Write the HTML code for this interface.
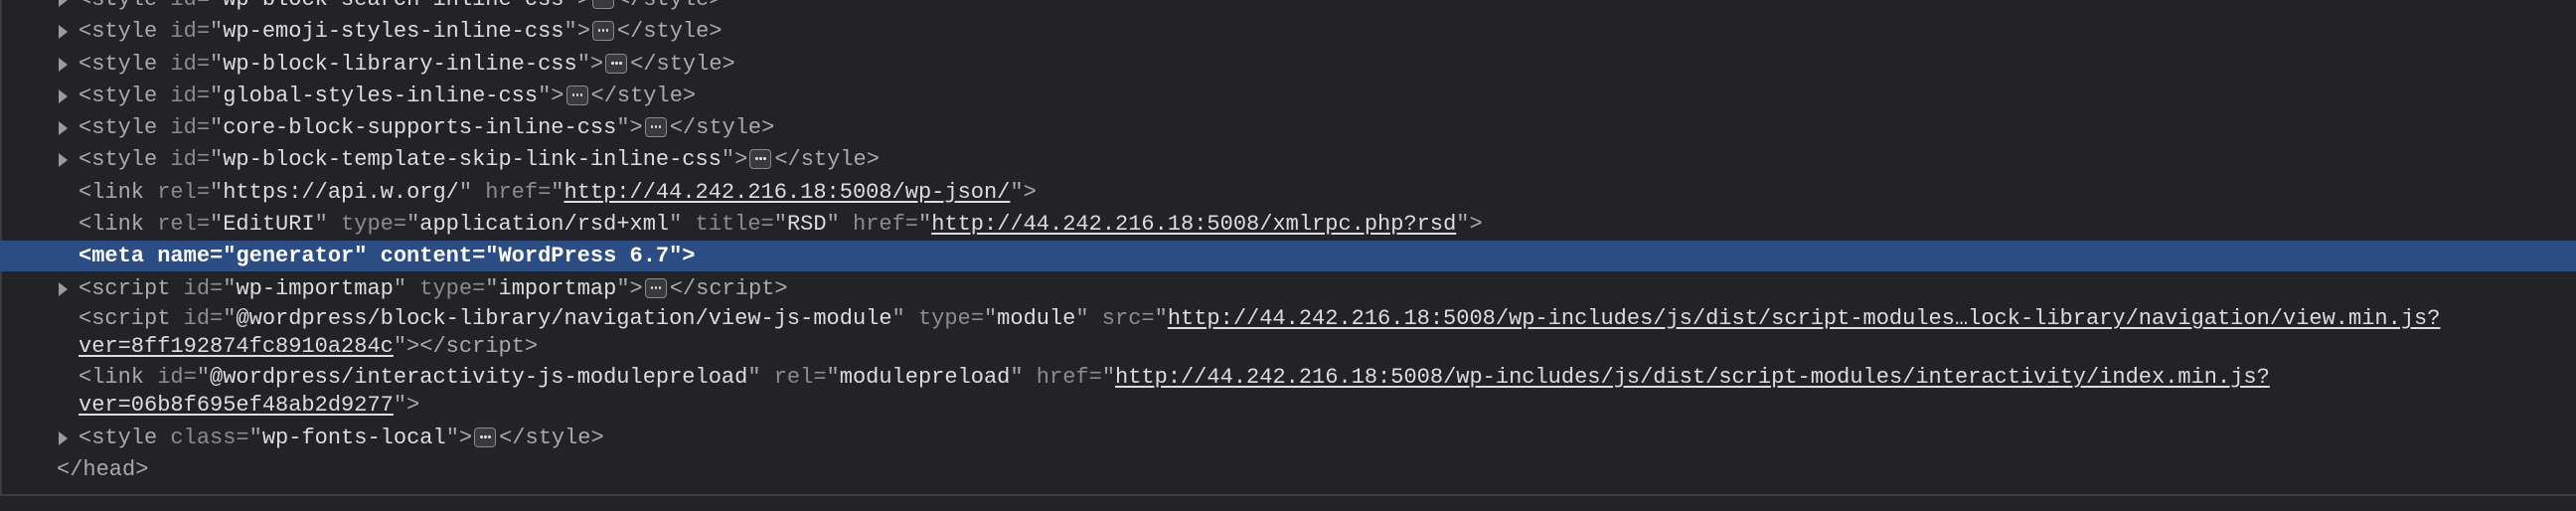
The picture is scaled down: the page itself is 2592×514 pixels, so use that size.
<!DOCTYPE html>
<html><head><meta charset="utf-8"><style>
html,body{margin:0;padding:0;}
body{width:2592px;height:514px;background:#232327;overflow:hidden;position:relative;font-family:"Liberation Mono",monospace;font-size:22px;}
.l{position:absolute;left:79px;height:28px;line-height:28px;white-space:pre;color:#a9a9ae;}
.t{color:#a9a9ae}.a{color:#8b8b90}.v{color:#dddde0}
.u{color:#dddde0;text-decoration:underline;text-underline-offset:3px}
.tri{position:absolute;left:-20px;top:7px;width:0;height:0;border-top:7px solid transparent;border-bottom:7px solid transparent;border-left:9px solid #9a9a9f;}
.e{display:inline-block;width:22px;height:20px;margin:0 3px 0 2px;vertical-align:-4px;border:1.5px solid #8a8a8f;border-radius:4px;background:#3a3a3e;box-sizing:border-box;position:relative}
.e::after{content:"";position:absolute;left:5px;top:7px;width:2.5px;height:2.5px;background:#ddd;border-radius:50%;box-shadow:4px 0 #ddd,8px 0 #ddd}
.hl{position:absolute;left:0;top:242px;width:2592px;height:31px;background:#2c4d84}
.w{color:#fff;font-weight:bold}
</style></head><body>
<div style="position:absolute;left:0;top:0;width:2px;height:498px;background:#3b3b3f"></div>
<div class="l" style="top:-14px"><span class="tri"></span>&lt;style <span class="a">id=</span>"<span class="v">wp-block-search-inline-css</span>"&gt;<span class="e"></span>&lt;/style&gt;</div>
<div class="l" style="top:18px"><span class="tri"></span>&lt;style <span class="a">id=</span>"<span class="v">wp-emoji-styles-inline-css</span>"&gt;<span class="e"></span>&lt;/style&gt;</div>
<div class="l" style="top:51px"><span class="tri"></span>&lt;style <span class="a">id=</span>"<span class="v">wp-block-library-inline-css</span>"&gt;<span class="e"></span>&lt;/style&gt;</div>
<div class="l" style="top:83px"><span class="tri"></span>&lt;style <span class="a">id=</span>"<span class="v">global-styles-inline-css</span>"&gt;<span class="e"></span>&lt;/style&gt;</div>
<div class="l" style="top:115px"><span class="tri"></span>&lt;style <span class="a">id=</span>"<span class="v">core-block-supports-inline-css</span>"&gt;<span class="e"></span>&lt;/style&gt;</div>
<div class="l" style="top:147px"><span class="tri"></span>&lt;style <span class="a">id=</span>"<span class="v">wp-block-template-skip-link-inline-css</span>"&gt;<span class="e"></span>&lt;/style&gt;</div>
<div class="l" style="top:180px">&lt;link <span class="a">rel=</span>"<span class="v">https://api.w.org/</span>" <span class="a">href=</span>"<span class="u">http://44.242.216.18:5008/wp-json/</span>"&gt;</div>
<div class="l" style="top:212px">&lt;link <span class="a">rel=</span>"<span class="v">EditURI</span>" <span class="a">type=</span>"<span class="v">application/rsd+xml</span>" <span class="a">title=</span>"<span class="v">RSD</span>" <span class="a">href=</span>"<span class="u">http://44.242.216.18:5008/xmlrpc.php?rsd</span>"&gt;</div>
<div class="hl"></div>
<div class="l" style="top:244px"><span class="w">&lt;meta name="generator" content="WordPress 6.7"&gt;</span></div>
<div class="l" style="top:277px"><span class="tri"></span>&lt;script <span class="a">id=</span>"<span class="v">wp-importmap</span>" <span class="a">type=</span>"<span class="v">importmap</span>"&gt;<span class="e"></span>&lt;/script&gt;</div>
<div class="l" style="top:307px">&lt;script <span class="a">id=</span>"<span class="v">@wordpress/block-library/navigation/view-js-module</span>" <span class="a">type=</span>"<span class="v">module</span>" <span class="a">src=</span>"<span class="u">http://44.242.216.18:5008/wp-includes/js/dist/script-modules…lock-library/navigation/view.min.js?</span></div>
<div class="l" style="top:335px"><span class="u">ver=8ff192874fc8910a284c</span>"&gt;&lt;/script&gt;</div>
<div class="l" style="top:366px">&lt;link <span class="a">id=</span>"<span class="v">@wordpress/interactivity-js-modulepreload</span>" <span class="a">rel=</span>"<span class="v">modulepreload</span>" <span class="a">href=</span>"<span class="u">http://44.242.216.18:5008/wp-includes/js/dist/script-modules/interactivity/index.min.js?</span></div>
<div class="l" style="top:394px"><span class="u">ver=06b8f695ef48ab2d9277</span>"&gt;</div>
<div class="l" style="top:427px"><span class="tri"></span>&lt;style <span class="a">class=</span>"<span class="v">wp-fonts-local</span>"&gt;<span class="e"></span>&lt;/style&gt;</div>
<div class="l" style="top:459px;left:57px">&lt;/head&gt;</div>
<div style="position:absolute;left:0;top:497px;width:2592px;height:2px;background:#3d3d42"></div>
<div style="position:absolute;left:0;top:499px;width:2592px;height:15px;background:#232327"></div>
</body></html>
